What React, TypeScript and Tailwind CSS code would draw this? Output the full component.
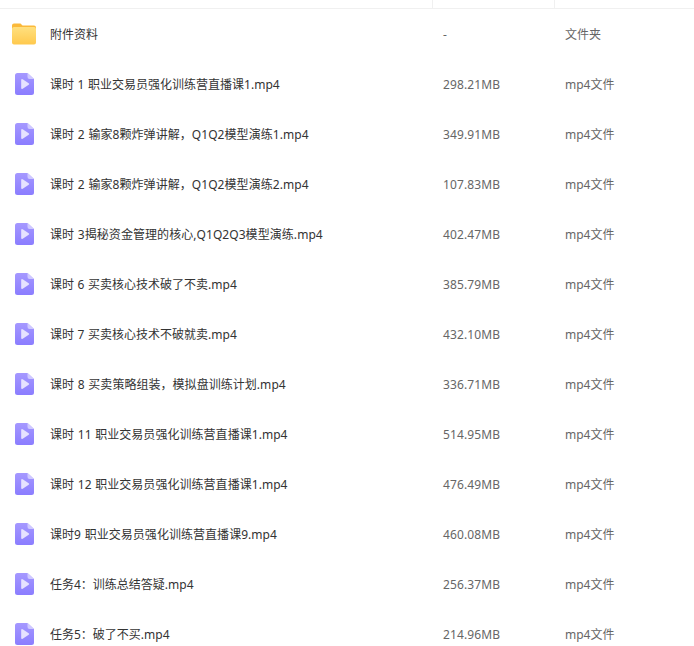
const rows: [string, string, string][] = [
  ["课时 1 职业交易员强化训练营直播课1.mp4", "298.21MB", ""],
  ["课时 2 输家8颗炸弹讲解，Q1Q2模型演练1.mp4", "349.91MB", "tracking-[0.06px]"],
  ["课时 2 输家8颗炸弹讲解，Q1Q2模型演练2.mp4", "107.83MB", "tracking-[0.06px]"],
  ["课时 3揭秘资金管理的核心,Q1Q2Q3模型演练.mp4", "402.47MB", "tracking-[0.06px]"],
  ["课时 6 买卖核心技术破了不卖.mp4", "385.79MB", ""],
  ["课时 7 买卖核心技术不破就卖.mp4", "432.10MB", ""],
  ["课时 8 买卖策略组装，模拟盘训练计划.mp4", "336.71MB", "tracking-[0.04px]"],
  ["课时 11 职业交易员强化训练营直播课1.mp4", "514.95MB", "tracking-[0.04px]"],
  ["课时 12 职业交易员强化训练营直播课1.mp4", "476.49MB", "tracking-[0.04px]"],
  ["课时9 职业交易员强化训练营直播课9.mp4", "460.08MB", "tracking-[0.04px]"],
  ["任务4：训练总结答疑.mp4", "256.37MB", ""],
  ["任务5：破了不买.mp4", "214.96MB", ""],
];

function FolderIcon() {
  return (
    <svg width="24" height="22" viewBox="0 0 24 22" className="block">
      <defs>
        <linearGradient id="fg" x1="0" y1="0" x2="0" y2="1">
          <stop offset="0" stopColor="#ffe07f" />
          <stop offset="1" stopColor="#ffc94d" />
        </linearGradient>
      </defs>
      <path d="M0 2.500a2 2 0 0 1 2-2h6.500l2 2H22a2 2 0 0 1 2 2v4H0z" fill="#fbb93a" />
      <path d="M0 5.500a2 2 0 0 1 2-1.500h20a2 2 0 0 1 2 2V19.500a2 2 0 0 1-2 2H2a2 2 0 0 1-2-2z" fill="url(#fg)" />
    </svg>
  );
}

function VideoIcon() {
  return (
    <svg width="19" height="22" viewBox="0 0 19 22" className="block">
      <defs>
        <linearGradient id="vg" x1="0" y1="0" x2="0" y2="1">
          <stop offset="0" stopColor="#a598ff" />
          <stop offset="1" stopColor="#8b7dff" />
        </linearGradient>
      </defs>
      <path d="M2.500 0h10L19 6V19.500a2.500 2.500 0 0 1-2.500 2.500h-14A2.500 2.500 0 0 1 0 19.500v-17A2.500 2.500 0 0 1 2.500 0z" fill="url(#vg)" />
      <path d="M12.500 0L19 6h-4.500a2 2 0 0 1-2-2z" fill="#cfc9ff" />
      <path d="M6.200 7a1 1 0 0 1 1.500-.8l6 4a1 1 0 0 1 0 1.600l-6 4a1 1 0 0 1-1.500-.8z" fill="#e6e2ff" />
    </svg>
  );
}

function Row({ icon, name, size, type, fit }: { icon: React.ReactNode; name: string; size: string; type: string; fit?: string }) {
  return (
    <div className="grid h-[50px] shrink-0 grid-cols-[433px_122px_1fr] items-center">
      <div className="flex items-center">
        <div className="mr-[2px] flex w-[48px] shrink-0 justify-center">{icon}</div>
        <span className={`whitespace-nowrap pt-[2px] text-[#333333] [word-spacing:0.5px] ${fit ?? ""}`}>{name}</span>
      </div>
      <div className="pl-[10px] pt-[2px] tracking-[0.12px] text-[#666666]">{size}</div>
      <div className="pl-[10px] pt-[2px] text-[#666666]">{type}</div>
    </div>
  );
}

export default function App() {
  return (
    <div className="flex h-[646px] w-[694px] flex-col overflow-hidden bg-white text-[12px] font-['Noto_Sans','Noto_Sans_CJK_SC',sans-serif]">
      <div className="grid h-[9px] shrink-0 grid-cols-[433px_122px_1fr] border-b border-[#f0f0f0]">
        <div className="border-r border-[#f0f0f0]" />
        <div className="border-r border-[#f0f0f0]" />
        <div />
      </div>
      <Row icon={<FolderIcon />} name="附件资料" size="-" type="文件夹" />
      {rows.map(([name, size, fit]) => (
        <Row key={name} icon={<VideoIcon />} name={name} size={size} type="mp4文件" fit={fit} />
      ))}
    </div>
  );
}
